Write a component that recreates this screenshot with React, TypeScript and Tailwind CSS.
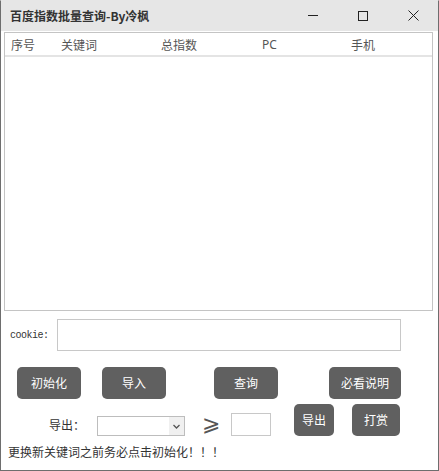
import React from "react";

const cjk = { fontFamily: '"Noto Sans CJK SC", "Noto Sans", sans-serif' };

function Btn({ w, h = 32, children }: { w: string; h?: number; children: React.ReactNode }) {
  return (
    <div
      className={`${w} flex items-center justify-center rounded-[5px] bg-[#606060] text-[12px] text-white`}
      style={{ height: h }}
    >
      {children}
    </div>
  );
}

export default function App() {
  return (
    <div
      className="w-[439px] h-[471px] bg-white border border-[#6e6e6e] border-t-[#e6e6e6] flex flex-col text-[#333]"
      style={cjk}
    >
      {/* title bar */}
      <div className="h-[31px] bg-[#e6e6e6] flex items-center shrink-0 -mt-px">
        <div className="pl-[9px] text-[12px] font-bold text-[#333] leading-none">百度指数批量查询-By冷枫</div>
        <div className="ml-auto flex h-full">
          <div className="w-[50px] h-full flex items-center justify-center">
            <div className="w-[10px] h-px bg-[#222]" />
          </div>
          <div className="w-[50px] h-full flex items-center justify-center">
            <div className="w-[10px] h-[10px] border border-[#222]" />
          </div>
          <div className="w-[50px] h-full flex items-center justify-center">
            <svg width="11" height="11" viewBox="0 0 11 11">
              <path d="M0.5 0.5 L10.5 10.5 M10.5 0.5 L0.5 10.5" stroke="#222" strokeWidth="1" />
            </svg>
          </div>
        </div>
      </div>

      {/* table */}
      <div className="mt-[1px] ml-[3px] w-[429px] h-[279px] border border-[#c4c4c4] shrink-0">
        <div className="h-[24px] border-b-2 border-[#e4e4e4] flex items-center text-[12px] text-[#555] pt-[2px]">
          <div className="w-[56px] pl-[6px]">序号</div>
          <div className="w-[100px]">关键词</div>
          <div className="w-[101px]">总指数</div>
          <div className="w-[89px]" style={{ fontFamily: '"Noto Sans", sans-serif' }}>PC</div>
          <div>手机</div>
        </div>
      </div>

      {/* cookie row */}
      <div className="mt-[8px] flex items-center shrink-0">
        <div
          className="w-[56px] pl-[9px] text-[10px] tracking-[-0.5px] text-[#333]"
          style={{ fontFamily: '"Liberation Mono", monospace' }}
        >
          cookie:
        </div>
        <div className="w-[344px] h-[32px] border border-[#c8c8c8]" />
      </div>

      {/* buttons row */}
      <div className="mt-[16px] flex shrink-0">
        <div className="ml-[16px]">
          <Btn w="w-[64px]">初始化</Btn>
        </div>
        <div className="ml-[21px]">
          <Btn w="w-[64px]">导入</Btn>
        </div>
        <div className="ml-[48px]">
          <Btn w="w-[64px]">查询</Btn>
        </div>
        <div className="ml-[51px]">
          <Btn w="w-[72px]">必看说明</Btn>
        </div>
      </div>

      {/* export row */}
      <div className="mt-[5px] h-[33px] flex items-end shrink-0">
        <div className="ml-[48px] mb-[3px] text-[12px] text-[#333] w-[48px]">导出：</div>
        <div className="w-[88px] h-[20px] border border-[#bdbdbd] flex mb-[1px]">
          <div className="flex-1" />
          <div className="w-[15px] h-full bg-[#f0f0f0] flex items-center justify-center">
            <svg width="7" height="5" viewBox="0 0 7 5">
              <path d="M0.5 1 L3.5 4 L6.5 1" stroke="#555" strokeWidth="1.3" fill="none" />
            </svg>
          </div>
        </div>
        <div
          className="ml-[17px] w-[29px] mb-[1px] text-[22px] leading-[24px] text-[#555]"
          style={{ fontFamily: '"DejaVu Sans", sans-serif' }}
        >
          ⩾
        </div>
        <div className="w-[40px] h-[23px] border border-[#c8c8c8] mb-px" />
        <div className="ml-[23px] mb-px">
          <Btn w="w-[40px]">导出</Btn>
        </div>
        <div className="ml-[18px] mb-px">
          <Btn w="w-[48px]">打赏</Btn>
        </div>
      </div>

      {/* note */}
      <div className="mt-[7px] pl-[7px] text-[12px] text-[#333] leading-[16px]">
        更换新关键词之前务必点击初始化！！！
      </div>
    </div>
  );
}
